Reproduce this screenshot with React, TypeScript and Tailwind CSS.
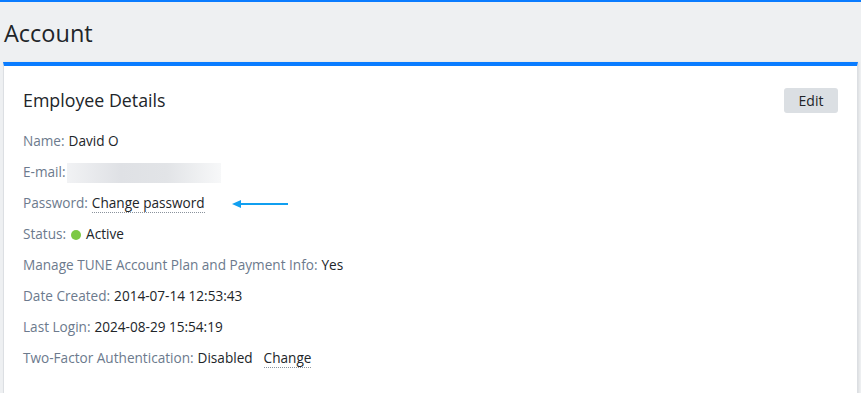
import React from "react";

const font = { fontFamily: '"Open Sans", "Noto Sans", sans-serif' };

function Row({ label, children }: { label: string; children?: React.ReactNode }) {
  return (
    <div className="flex h-[31px] items-center text-[13.6px] whitespace-nowrap">
      <span className="text-[#6c7a8d]">{label}</span>
      {children}
    </div>
  );
}

export default function App() {
  return (
    <div className="w-[861px] h-[393px] overflow-hidden bg-[#eef0f2] text-[#212529]" style={font}>
      <div className="h-[2px] bg-[#0a7cff]" />
      <div className="h-[60px] flex items-center pl-[4px]">
        <h1 className="text-[23.5px] leading-none text-[#212529] mt-[4px]">Account</h1>
      </div>
      <div className="ml-[3px] mr-[3px] bg-white border-l border-r border-[#dcdfe3] border-t-[4px] border-t-[#0a7cff] h-[340px] shadow-[1px_0_2px_rgba(0,0,0,0.08)]">
        <div className="flex items-start justify-between pl-[19px] pr-[19px] pt-[21px]">
          <h2 className="text-[17.8px] leading-[26px] text-[#212529]">Employee Details</h2>
          <button className="mt-[1px] h-[25px] w-[54px] rounded-[3px] bg-[#dbdfe3] text-[14px] text-[#212529] flex items-center justify-center">
            Edit
          </button>
        </div>
        <div className="pl-[19px] pt-[13px]">
          <Row label="Name:">
            <span className="ml-[4px]">David O</span>
          </Row>
          <Row label="E-mail:">
            <span className="ml-[1px] h-[20px] w-[154px] bg-[linear-gradient(90deg,#f1f2f4_0%,#dfe1e5_35%,#e2e4e7_65%,#f7f8f9_100%)]" />
          </Row>
          <Row label="Password:">
            <span className="ml-[4px] border-b border-dotted border-[#8a929c] leading-[18px]">Change password</span>
            <svg width="58" height="10" viewBox="0 0 58 10" className="ml-[27px]">
              <line x1="6" y1="5" x2="56" y2="5" stroke="#109ff0" strokeWidth="2" />
              <polygon points="0,5 9,1 9,9" fill="#109ff0" />
            </svg>
          </Row>
          <Row label="Status:">
            <span className="ml-[5px] mr-[5px] inline-block h-[10px] w-[10px] rounded-full bg-[#7cc943]" />
            <span>Active</span>
          </Row>
          <Row label="Manage TUNE Account Plan and Payment Info:">
            <span className="ml-[4px]">Yes</span>
          </Row>
          <Row label="Date Created:">
            <span className="ml-[4px]">2014-07-14 12:53:43</span>
          </Row>
          <Row label="Last Login:">
            <span className="ml-[4px]">2024-08-29 15:54:19</span>
          </Row>
          <Row label="Two-Factor Authentication:">
            <span className="ml-[4px]">Disabled</span>
            <span className="ml-[11px] border-b border-dotted border-[#8a929c] leading-[18px]">Change</span>
          </Row>
        </div>
      </div>
    </div>
  );
}
